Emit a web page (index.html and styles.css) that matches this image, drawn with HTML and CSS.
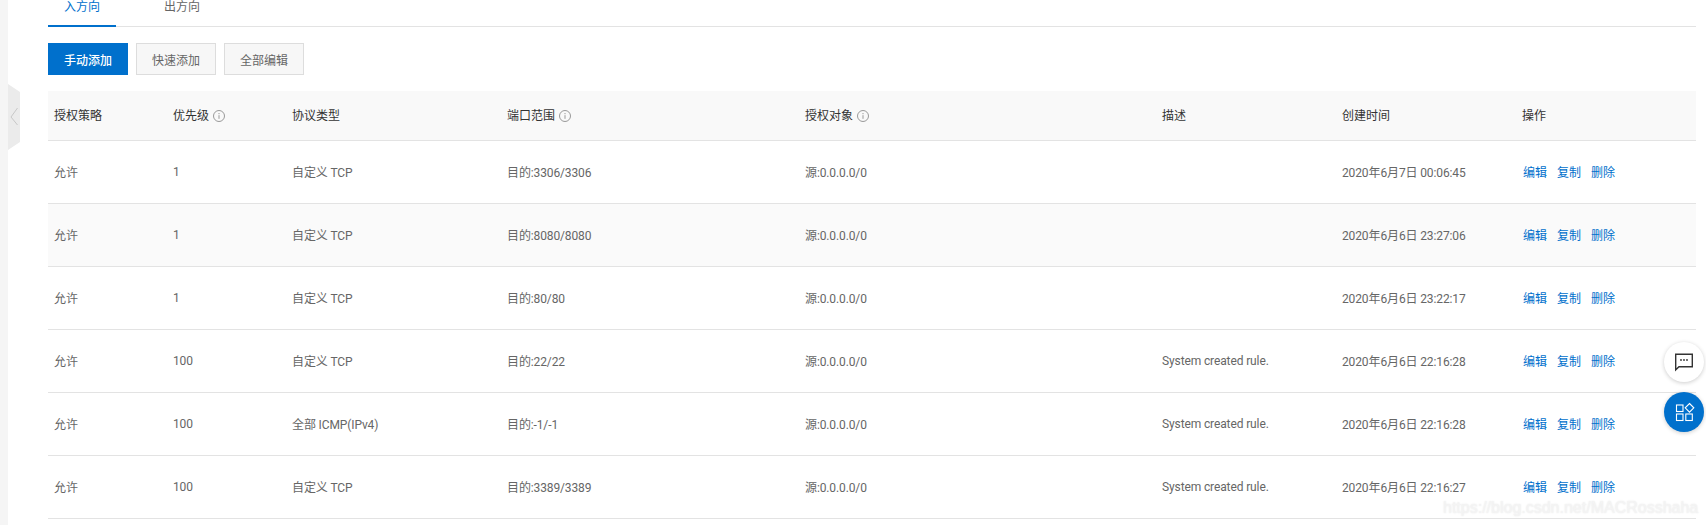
FILE: index.html
```html
<!DOCTYPE html>
<html lang="zh-CN">
<head>
  <meta charset="UTF-8" />
  <title>安全组规则</title>
  <link rel="stylesheet" href="styles.css">
</head>
<body>
  <div class="side-strip"></div>
  <div class="side-toggle">
    <svg width="12" height="66" viewBox="0 0 12 66">
      <polygon points="0,0 12,8 12,58 0,66" fill="#ebebeb"/>
      <polyline points="9.5,24 3,33 9.5,41" fill="none" stroke="#c8c8c8" stroke-width="1"/>
    </svg>
  </div>

  <div class="main">
    <div class="tabs">
      <div class="tab active">入方向</div>
      <div class="tab">出方向</div>
    </div>

    <div class="toolbar">
      <button class="btn primary">手动添加</button>
      <button class="btn">快速添加</button>
      <button class="btn">全部编辑</button>
    </div>

    <table class="rules">
      <colgroup>
        <col class="c-policy"><col class="c-priority"><col class="c-proto"><col class="c-port">
        <col class="c-target"><col class="c-desc"><col class="c-time"><col class="c-ops">
      </colgroup>
      <thead>
        <tr>
          <th>授权策略</th>
          <th>优先级 <svg class="info" viewBox="0 0 12 12"><circle cx="6" cy="6" r="5.5"/><path d="M6 5.2v3.6M6 3v1.2"/></svg></th>
          <th>协议类型</th>
          <th>端口范围 <svg class="info" viewBox="0 0 12 12"><circle cx="6" cy="6" r="5.5"/><path d="M6 5.2v3.6M6 3v1.2"/></svg></th>
          <th>授权对象 <svg class="info" viewBox="0 0 12 12"><circle cx="6" cy="6" r="5.5"/><path d="M6 5.2v3.6M6 3v1.2"/></svg></th>
          <th>描述</th>
          <th>创建时间</th>
          <th>操作</th>
        </tr>
      </thead>
      <tbody>
        <tr>
          <td>允许</td><td>1</td><td>自定义 TCP</td><td>目的:3306/3306</td><td>源:0.0.0.0/0</td><td></td>
          <td>2020年6月7日 00:06:45</td>
          <td class="ops"><a>编辑</a><a>复制</a><a>删除</a></td>
        </tr>
        <tr class="hover">
          <td>允许</td><td>1</td><td>自定义 TCP</td><td>目的:8080/8080</td><td>源:0.0.0.0/0</td><td></td>
          <td>2020年6月6日 23:27:06</td>
          <td class="ops"><a>编辑</a><a>复制</a><a>删除</a></td>
        </tr>
        <tr>
          <td>允许</td><td>1</td><td>自定义 TCP</td><td>目的:80/80</td><td>源:0.0.0.0/0</td><td></td>
          <td>2020年6月6日 23:22:17</td>
          <td class="ops"><a>编辑</a><a>复制</a><a>删除</a></td>
        </tr>
        <tr>
          <td>允许</td><td>100</td><td>自定义 TCP</td><td>目的:22/22</td><td>源:0.0.0.0/0</td><td>System created rule.</td>
          <td>2020年6月6日 22:16:28</td>
          <td class="ops"><a>编辑</a><a>复制</a><a>删除</a></td>
        </tr>
        <tr>
          <td>允许</td><td>100</td><td>全部 ICMP(IPv4)</td><td>目的:-1/-1</td><td>源:0.0.0.0/0</td><td>System created rule.</td>
          <td>2020年6月6日 22:16:28</td>
          <td class="ops"><a>编辑</a><a>复制</a><a>删除</a></td>
        </tr>
        <tr>
          <td>允许</td><td>100</td><td>自定义 TCP</td><td>目的:3389/3389</td><td>源:0.0.0.0/0</td><td>System created rule.</td>
          <td>2020年6月6日 22:16:27</td>
          <td class="ops"><a>编辑</a><a>复制</a><a>删除</a></td>
        </tr>
      </tbody>
    </table>
  </div>

  <div class="float-btn chat">
    <svg width="40" height="40" viewBox="0 0 40 40">
      <path d="M11.7 12.2h16.6v12.6H15l-3.3 3z" fill="none" stroke="#333" stroke-width="1.4"/>
      <circle cx="17" cy="18" r="0.9" fill="#333"/><circle cx="20" cy="18" r="0.9" fill="#333"/><circle cx="23" cy="18" r="0.9" fill="#333"/>
    </svg>
  </div>
  <div class="float-btn apps">
    <svg width="40" height="40" viewBox="0 0 40 40" fill="none" stroke="#fff" stroke-width="1.1">
      <rect x="12.5" y="13" width="6.5" height="6.5"/>
      <rect x="12.5" y="22" width="6.5" height="6.5"/>
      <rect x="21.8" y="22" width="6.5" height="6.5"/>
      <path d="M25.5 11.5l4.3 4.3-4.3 4.3-4.3-4.3z"/>
    </svg>
  </div>

  <div class="watermark">https://blog.csdn.net/MACRosshaha</div>
</body>
</html>
```

FILE: styles.css
```css
* { margin: 0; padding: 0; box-sizing: border-box; }
html, body { height: 100%; background: #fff; overflow: hidden; }
body {
  position: relative;
  font-family: Roboto, "Noto Sans CJK SC", Arial, sans-serif;
  font-size: 12px;
  color: #666;
}

.side-strip {
  position: absolute;
  left: 0;
  top: 0;
  bottom: 0;
  width: 8px;
  background: #f5f5f5;
}

.side-toggle {
  position: absolute;
  left: 8px;
  top: 84px;
  width: 12px;
  height: 66px;
}
.side-toggle svg { display: block; }

.main {
  padding: 0 10px 0 48px;
}

.tabs {
  display: flex;
  height: 27px;
  border-bottom: 1px solid #e3e3e3;
}

.tab {
  width: 108px;
  padding: 0 16px;
  line-height: 15px;
  color: #666;
}
.tab.active {
  width: 68px;
  margin-right: 32px;
  height: 27px;
  color: #0070cc;
  border-bottom: 2px solid #0070cc;
}

.toolbar {
  display: flex;
  gap: 8px;
  margin-top: 16px;
  margin-bottom: 16px;
}

.btn {
  width: 80px;
  height: 32px;
  font: inherit;
  color: #666;
  background: #f7f7f7;
  border: 1px solid #ddd;
}
.btn.primary {
  color: #fff;
  font-weight: 500;
  background: #0070cc;
  border-color: #0070cc;
}

.rules {
  width: 100%;
  table-layout: fixed;
  border-collapse: collapse;
}

.c-policy, .c-priority { width: 119px; }
.c-proto { width: 215px; }
.c-port { width: 298px; }
.c-target { width: 357px; }
.c-desc, .c-time { width: 180px; }

.rules th {
  height: 49px;
  padding: 0 6px 2px;
  text-align: left;
  font-weight: 400;
  color: #333;
  background: #f9f9f9;
  border-bottom: 1px solid #e3e3e3;
}

.rules td {
  height: 63px;
  padding: 0 6px;
  letter-spacing: -0.12px;
  border-bottom: 1px solid #e3e3e3;
}

.rules tr.hover td { background: #fafafa; }

.rules td.ops {
  padding-left: 7px;
  letter-spacing: 0;
}

.info {
  width: 12px;
  height: 12px;
  margin-left: 1px;
  vertical-align: -2px;
  fill: none;
  stroke: #999;
  stroke-width: 1;
}

.ops a {
  color: #0070cc;
  margin-right: 10px;
}

.float-btn {
  position: absolute;
  left: 1664px;
  width: 40px;
  height: 40px;
  border-radius: 50%;
  box-shadow: 0 1px 4px rgba(0, 0, 0, 0.2);
}
.float-btn svg { display: block; }
.float-btn.chat { top: 342px; background: #fff; }
.float-btn.apps { top: 392px; background: #0070cc; }

.watermark {
  position: absolute;
  left: 1443px;
  top: 498px;
  width: 255px;
  font-family: "Liberation Sans", Arial, sans-serif;
  font-size: 16px;
  line-height: 20px;
  white-space: nowrap;
  color: #f4f4f4;
  text-shadow: 0 0 2px rgba(0, 0, 0, 0.1);
}
```
